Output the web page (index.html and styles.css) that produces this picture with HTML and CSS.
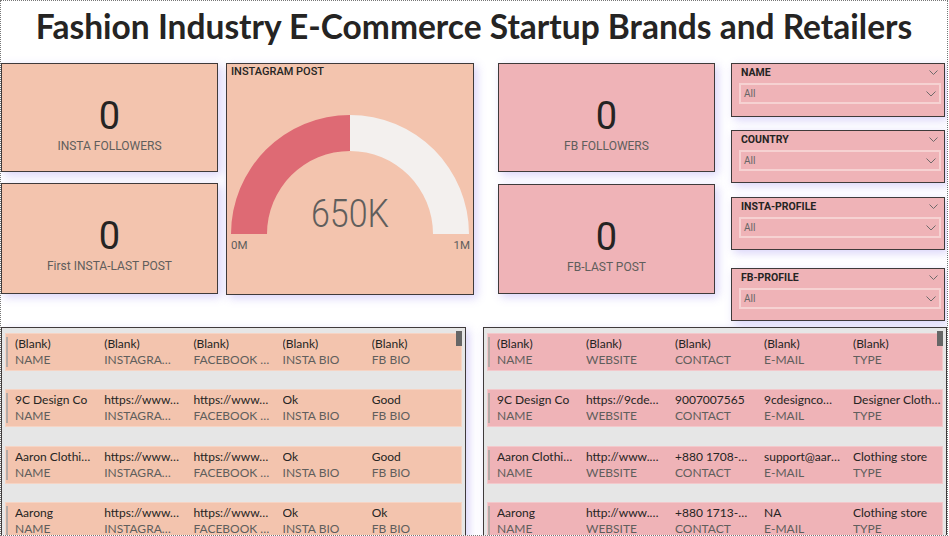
FILE: index.html
```html
<!DOCTYPE html>
<html>
<head>
<meta charset="utf-8">
<link rel="stylesheet" href="styles.css">
</head>
<body>
<div class="page">
  <header class="title">Fashion Industry E-Commerce Startup Brands and Retailers</header>
  <section class="top">
    <div class="kpi-col">
      <div class="card kpi peach k1"><div class="kpi-val">0</div><div class="kpi-lbl">INSTA FOLLOWERS</div></div>
      <div class="card kpi peach k2"><div class="kpi-val">0</div><div class="kpi-lbl">First INSTA-LAST POST</div></div>
    </div>
    <div class="card gauge peach">
      <div class="gauge-title">INSTAGRAM POST</div>
      <svg class="gauge-svg" width="246" height="214" viewBox="0 0 246 214">
        <path d="M4 154 A119 119 0 0 1 123 35 L123 71 A83 83 0 0 0 40 154 Z" fill="#de6a74"/>
        <path d="M123 35 A119 119 0 0 1 242 154 L206 154 A83 83 0 0 0 123 71 Z" fill="#f3f0ee"/>
        <text x="123" y="147" class="g-val" text-anchor="middle" textLength="78" lengthAdjust="spacingAndGlyphs">650K</text>
        <text x="4" y="169" class="g-axis">0M</text>
        <text x="243" y="169" class="g-axis" text-anchor="end">1M</text>
      </svg>
    </div>
    <div class="kpi-col fb-col">
      <div class="card kpi pink k1"><div class="kpi-val">0</div><div class="kpi-lbl">FB FOLLOWERS</div></div>
      <div class="card kpi pink k3"><div class="kpi-val">0</div><div class="kpi-lbl">FB-LAST POST</div></div>
    </div>
    <div class="slicers">
      <div class="card slicer pink s1">
        <div class="sl-head"><span>NAME</span><svg width="9" height="5" viewBox="0 0 9 5"><polyline points="0.5,0.5 4.5,4.5 8.5,0.5" fill="none" stroke="#6f6a6a" stroke-width="1"/></svg></div>
        <div class="sl-box"><span>All</span><svg width="10" height="6" viewBox="0 0 10 6"><polyline points="0.5,0.5 5,5 9.5,0.5" fill="none" stroke="#6f6a6a" stroke-width="1"/></svg></div>
      </div>
      <div class="card slicer pink s2">
        <div class="sl-head"><span>COUNTRY</span><svg width="9" height="5" viewBox="0 0 9 5"><polyline points="0.5,0.5 4.5,4.5 8.5,0.5" fill="none" stroke="#6f6a6a" stroke-width="1"/></svg></div>
        <div class="sl-box"><span>All</span><svg width="10" height="6" viewBox="0 0 10 6"><polyline points="0.5,0.5 5,5 9.5,0.5" fill="none" stroke="#6f6a6a" stroke-width="1"/></svg></div>
      </div>
      <div class="card slicer pink s3">
        <div class="sl-head"><span>INSTA-PROFILE</span><svg width="9" height="5" viewBox="0 0 9 5"><polyline points="0.5,0.5 4.5,4.5 8.5,0.5" fill="none" stroke="#6f6a6a" stroke-width="1"/></svg></div>
        <div class="sl-box"><span>All</span><svg width="10" height="6" viewBox="0 0 10 6"><polyline points="0.5,0.5 5,5 9.5,0.5" fill="none" stroke="#6f6a6a" stroke-width="1"/></svg></div>
      </div>
      <div class="card slicer pink s4">
        <div class="sl-head"><span>FB-PROFILE</span><svg width="9" height="5" viewBox="0 0 9 5"><polyline points="0.5,0.5 4.5,4.5 8.5,0.5" fill="none" stroke="#6f6a6a" stroke-width="1"/></svg></div>
        <div class="sl-box"><span>All</span><svg width="10" height="6" viewBox="0 0 10 6"><polyline points="0.5,0.5 5,5 9.5,0.5" fill="none" stroke="#6f6a6a" stroke-width="1"/></svg></div>
      </div>
    </div>
  </section>
  <section class="tables">
    <div class="table t-left">
      <div class="scroll"></div>
      <div class="row"><div class="c"><div class="v">(Blank)</div><div class="l">NAME</div></div><div class="c"><div class="v">(Blank)</div><div class="l">INSTAGRAM PROFILE</div></div><div class="c"><div class="v">(Blank)</div><div class="l">FACEBOOK PROFILE</div></div><div class="c"><div class="v">(Blank)</div><div class="l">INSTA BIO</div></div><div class="c last"><div class="v">(Blank)</div><div class="l">FB BIO</div></div></div>
      <div class="row"><div class="c"><div class="v">9C Design Co</div><div class="l">NAME</div></div><div class="c"><div class="v">https://www.instagram.com</div><div class="l">INSTAGRAM PROFILE</div></div><div class="c"><div class="v">https://www.facebook.com</div><div class="l">FACEBOOK PROFILE</div></div><div class="c"><div class="v">Ok</div><div class="l">INSTA BIO</div></div><div class="c last"><div class="v">Good</div><div class="l">FB BIO</div></div></div>
      <div class="row"><div class="c"><div class="v">Aaron Clothing Store</div><div class="l">NAME</div></div><div class="c"><div class="v">https://www.instagram.com</div><div class="l">INSTAGRAM PROFILE</div></div><div class="c"><div class="v">https://www.facebook.com</div><div class="l">FACEBOOK PROFILE</div></div><div class="c"><div class="v">Ok</div><div class="l">INSTA BIO</div></div><div class="c last"><div class="v">Good</div><div class="l">FB BIO</div></div></div>
      <div class="row"><div class="c"><div class="v">Aarong</div><div class="l">NAME</div></div><div class="c"><div class="v">https://www.instagram.com</div><div class="l">INSTAGRAM PROFILE</div></div><div class="c"><div class="v">https://www.facebook.com</div><div class="l">FACEBOOK PROFILE</div></div><div class="c"><div class="v">Ok</div><div class="l">INSTA BIO</div></div><div class="c last"><div class="v">Ok</div><div class="l">FB BIO</div></div></div>
    </div>
    <div class="table t-right">
      <div class="scroll"></div>
      <div class="row"><div class="c"><div class="v">(Blank)</div><div class="l">NAME</div></div><div class="c"><div class="v">(Blank)</div><div class="l">WEBSITE</div></div><div class="c"><div class="v">(Blank)</div><div class="l">CONTACT</div></div><div class="c"><div class="v">(Blank)</div><div class="l">E-MAIL</div></div><div class="c last"><div class="v">(Blank)</div><div class="l">TYPE</div></div></div>
      <div class="row"><div class="c"><div class="v">9C Design Co</div><div class="l">NAME</div></div><div class="c"><div class="v">https://9cdesignco.com</div><div class="l">WEBSITE</div></div><div class="c"><div class="v">9007007565</div><div class="l">CONTACT</div></div><div class="c"><div class="v">9cdesignco@gmail.com</div><div class="l">E-MAIL</div></div><div class="c last"><div class="v">Designer Clothing store</div><div class="l">TYPE</div></div></div>
      <div class="row"><div class="c"><div class="v">Aaron Clothing Store</div><div class="l">NAME</div></div><div class="c"><div class="v">http://www.aaron.com</div><div class="l">WEBSITE</div></div><div class="c"><div class="v">+880 1708-000000</div><div class="l">CONTACT</div></div><div class="c"><div class="v">support@aaron.com</div><div class="l">E-MAIL</div></div><div class="c last"><div class="v">Clothing store</div><div class="l">TYPE</div></div></div>
      <div class="row"><div class="c"><div class="v">Aarong</div><div class="l">NAME</div></div><div class="c"><div class="v">http://www.aarong.com</div><div class="l">WEBSITE</div></div><div class="c"><div class="v">+880 1713-000000</div><div class="l">CONTACT</div></div><div class="c"><div class="v">NA</div><div class="l">E-MAIL</div></div><div class="c last"><div class="v">Clothing store</div><div class="l">TYPE</div></div></div>
    </div>
  </section>
</div>
</body>
</html>
```
FILE: styles.css
```css
* { box-sizing: border-box; }
html, body { margin: 0; padding: 0; background: #ffffff; }
.page {
  width: 948px;
  height: 536px;
  border: 1px dotted #777;
  overflow: hidden;
  display: flex;
  flex-direction: column;
  font-family: Roboto, "Noto Sans", sans-serif;
}
.title {
  flex: none;
  height: 62px;
  padding-top: 5px;
  text-align: center;
  font-family: Lato, "Open Sans", sans-serif;
  font-weight: 700;
  font-size: 33.5px;
  line-height: 40px;
  color: #252423;
  white-space: nowrap;
}
.top {
  display: flex;
  align-items: flex-start;
  height: 258px;
  flex: none;
}
.card {
  border: 1px solid #3f3a3a;
  box-shadow: 3px 3px 9px rgba(115, 95, 235, 0.28);
}
.peach { background: #f3c4ae; }
.pink { background: #efb3b7; }

.kpi-col {
  width: 217px;
  display: flex;
  flex-direction: column;
}
.fb-col { margin-left: 24px; }
.kpi {
  display: flex;
  flex-direction: column;
  align-items: center;
  flex: none;
}
.k1 { height: 109px; padding-top: 33px; margin-bottom: 11px; }
.k2 { height: 111px; padding-top: 33px; }
.fb-col .k1 { margin-bottom: 12px; }
.k3 { height: 110px; padding-top: 33px; }
.kpi-val {
  font-size: 38px;
  line-height: 38px;
  color: #252423;
}
.kpi-lbl {
  margin-top: 4px;
  font-size: 12px;
  line-height: 14px;
  color: #605e5c;
}

.gauge {
  margin-left: 8px;
  width: 248px;
  height: 232px;
  display: flex;
  flex-direction: column;
}
.gauge-title {
  flex: none;
  height: 16px;
  padding: 1px 0 0 4px;
  font-size: 11px;
  line-height: 14px;
  font-weight: 500;
  color: #252423;
}
.gauge-svg { display: block; flex: none; }
.g-val {
  font-family: Roboto, sans-serif;
  font-weight: 300;
  font-size: 39px;
  fill: #605e5c;
}
.g-axis {
  font-family: Roboto, sans-serif;
  font-size: 11.5px;
  fill: #605e5c;
}

.slicers {
  margin-left: 16px;
  width: 214px;
  display: flex;
  flex-direction: column;
}
.slicer {
  flex: none;
  padding: 0 3px 0 7px;
}
.s1 { height: 54px; margin-bottom: 13px; }
.s2 { height: 53px; margin-bottom: 14px; }
.s3 { height: 53px; margin-bottom: 18px; }
.s4 { height: 53px; }
.sl-head {
  height: 19px;
  padding: 2px 3px 0 2px;
  display: flex;
  justify-content: space-between;
  align-items: flex-start;
  font-size: 10.5px;
  line-height: 13px;
  font-weight: 700;
  color: #252423;
}
.sl-head svg { margin-top: 4px; }
.sl-box {
  height: 21px;
  border: 2px solid #f6d2d2;
  padding: 0 3px 0 3px;
  display: flex;
  justify-content: space-between;
  align-items: center;
  font-size: 10px;
  color: #666;
}
.sl-box svg { margin-top: 1px; }

.tables {
  display: flex;
  margin-top: 6px;
  flex: none;
}
.table {
  position: relative;
  height: 220px;
  border: 1px solid #3f3a3a;
  background: #e6e6e6;
  padding: 5px 3px 0 3px;
  display: flex;
  flex-direction: column;
  gap: 18.3px;
  box-shadow: 3px 3px 9px rgba(115, 95, 235, 0.28);
}
.t-left { width: 465px; }
.t-right { width: 464px; margin-left: 17px; }
.t-left .row { background: #f3c4ae; }
.t-right .row { background: #efb3b7; }
.scroll {
  position: absolute;
  top: 3px;
  right: 3px;
  width: 6px;
  height: 15px;
  background: #666;
  z-index: 2;
}
.row {
  position: relative;
  flex: none;
  height: 38px;
  border: 1px solid rgba(255, 255, 255, 0.28);
  padding: 2px 0 0 9px;
  display: grid;
  grid-template-columns: repeat(5, 1fr);
  font-family: Lato, "Open Sans", sans-serif;
  font-size: 12px;
  line-height: 16px;
}
.row::before {
  content: "";
  position: absolute;
  left: 0;
  top: 3px;
  bottom: 3px;
  width: 2px;
  background: #b3aaa6;
}
.c {
  min-width: 0;
  padding-right: 13px;
}
.c.last { padding-right: 0; }
.v, .l {
  white-space: nowrap;
  overflow: hidden;
  text-overflow: ellipsis;
}
.v { color: #252423; }
.l { color: #605e5c; }
```
